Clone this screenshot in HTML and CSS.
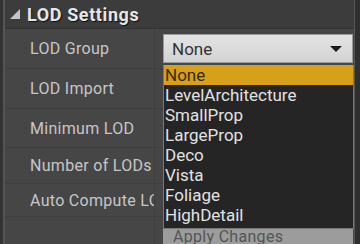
FILE: index.html
```html
<!DOCTYPE html>
<html lang="en">
<head>
  <meta charset="UTF-8">
  <title>LOD Settings</title>
  <link rel="stylesheet" href="styles.css">
</head>
<body>
  <div class="panel">
    <div class="edge"></div>
    <div class="main">
      <div class="header">
        <span class="arrow"></span>
        <span class="title">LOD Settings</span>
      </div>

      <div class="row row-1">
        <div class="label">LOD Group</div>
        <div class="value">
          <div class="combo">
            <span>None</span>
            <span class="caret"></span>
          </div>
        </div>
      </div>
      <div class="row row-1">
        <div class="label">LOD Import</div>
        <div class="value"></div>
      </div>
      <div class="row row-2">
        <div class="label">Minimum LOD</div>
        <div class="value"></div>
      </div>
      <div class="row row-3">
        <div class="label">Number of LODs</div>
        <div class="value"></div>
      </div>
      <div class="row row-4">
        <div class="label">Auto Compute LOD Distances</div>
        <div class="value"></div>
      </div>
      <div class="row row-btn">
        <div class="label"></div>
        <div class="value">
          <button class="apply">Apply Changes</button>
        </div>
      </div>

      <ul class="menu">
        <li class="active">None</li>
        <li>LevelArchitecture</li>
        <li>SmallProp</li>
        <li>LargeProp</li>
        <li>Deco</li>
        <li>Vista</li>
        <li>Foliage</li>
        <li>HighDetail</li>
      </ul>
    </div>
    <div class="scroll"></div>
  </div>
</body>
</html>
```

FILE: styles.css
```css
body {
  margin: 0;
  background: #3a3a3a;
  font-family: Roboto, "Liberation Sans", sans-serif;
  overflow: hidden;
}
.panel {
  display: flex;
  width: 360px;
  height: 244px;
}
.edge {
  width: 3px;
  background: #333;
  border-right: 2px solid #555;
}
.main {
  position: relative;
  flex: 1;
  background: #464646;
}
.scroll {
  width: 5px;
  background: #2f2f2f;
  border-left: 1px solid #555;
}
.header {
  display: flex;
  align-items: center;
  height: 29px;
  background: #3c3c3c;
  border-bottom: 1px solid #333;
  box-sizing: border-box;
}
.arrow {
  width: 0;
  height: 0;
  margin: 0 7px 0 5px;
  border-left: 10px solid transparent;
  border-bottom: 10px solid #c4c4c4;
}
.title {
  color: #e6e6e6;
  font-size: 18px;
  font-weight: bold;
  letter-spacing: 0.6px;
  text-shadow: 1px 1px 1px #111;
}
.row {
  display: flex;
  border-bottom: 1px solid #3f3f3f;
  box-sizing: border-box;
}
.row-1 { height: 40px; }
.row-2 { height: 39px; }
.row-3 { height: 36px; }
.row-4 { height: 33px; }
.row-btn { height: 30px; border-bottom: none; }
.label {
  width: 150px;
  padding-left: 25px;
  box-sizing: border-box;
  display: flex;
  align-items: center;
  color: #c6c6c6;
  font-size: 16px;
  letter-spacing: 0.3px;
  white-space: nowrap;
  overflow: hidden;
  border-right: 1px solid #3e3e3e;
}
.value {
  flex: 1;
  display: flex;
  align-items: center;
  padding-left: 8px;
}
.combo {
  display: flex;
  align-items: center;
  justify-content: space-between;
  width: 190px;
  height: 29px;
  padding: 0 8px;
  box-sizing: border-box;
  background: linear-gradient(#e4e4e4, #d2d2d2);
  border: 1px solid #9a9a9a;
  color: #333;
  font-size: 17px;
}
.caret {
  width: 0;
  height: 0;
  margin-right: 2px;
  border-left: 6px solid transparent;
  border-right: 6px solid transparent;
  border-top: 6px solid #1a1a1a;
}
.apply {
  width: 190px;
  height: 24px;
  margin-top: 8px;
  border: none;
  background: #9c9c9c;
  color: #555;
  font-family: inherit;
  font-size: 16px;
  letter-spacing: 0.3px;
  text-align: left;
  padding-left: 10px;
}
.menu {
  position: absolute;
  left: 158px;
  top: 65px;
  width: 191px;
  margin: 0;
  padding: 0 0 3px;
  list-style: none;
  background: #252525;
  border: 1px solid #777;
  border-top: none;
  box-sizing: border-box;
}
.menu li {
  height: 20px;
  line-height: 20px;
  padding-left: 1px;
  color: #e2e2e2;
  font-size: 17px;
}
.menu .active {
  background: #d6a01a;
  color: #3a2a00;
}
```
